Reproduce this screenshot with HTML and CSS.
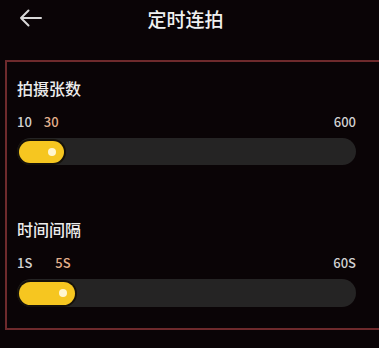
FILE: index.html
```html
<!DOCTYPE html>
<html lang="zh">
<head>
  <meta charset="UTF-8" />
  <meta name="viewport" content="width=device-width, initial-scale=1.0"/>
  <title>定时连拍</title>
  <link rel="stylesheet" href="styles.css">
</head>
<body>
  <header class="topbar">
    <button class="back" aria-label="返回">
      <svg width="24" height="18" viewBox="0 0 24 18">
        <path d="M22 9H2M9.5 1.5L2 9l7.5 7.5" fill="none" stroke="#d8d8d8" stroke-width="2" stroke-linecap="round" stroke-linejoin="round"/>
      </svg>
    </button>
    <h1>定时连拍</h1>
  </header>

  <div class="panel">
    <div class="setting">
      <h2>拍摄张数</h2>
      <div class="values">
        <span>10</span>
        <span class="current" style="margin-left: 12px">30</span>
        <span class="max">600</span>
      </div>
      <div class="track">
        <div class="fill" style="width: 45px"><i class="dot"></i></div>
      </div>
    </div>

    <div class="setting second">
      <h2>时间间隔</h2>
      <div class="values">
        <span>1S</span>
        <span class="current" style="margin-left: 23px">5S</span>
        <span class="max">60S</span>
      </div>
      <div class="track">
        <div class="fill" style="width: 56px"><i class="dot"></i></div>
      </div>
    </div>
  </div>
</body>
</html>
```

FILE: styles.css
```css
body {
  margin: 0;
  overflow: hidden;
  background: #0a0406;
  color: #e8e8e8;
  font-family: "Noto Sans CJK SC", "Noto Sans", sans-serif;
}

.topbar {
  display: flex;
  align-items: center;
  height: 36px;
}

.back {
  background: none;
  border: none;
  padding: 0 0 0 19px;
  display: flex;
  cursor: pointer;
}

.topbar h1 {
  flex: 1;
  margin: 0;
  padding-right: 51px;
  text-align: center;
  font-size: 19px;
  font-weight: 500;
  color: #f0f0f0;
}

.panel {
  margin: 24px -4px 0 5px;
  border: 2px solid #6e2a2c;
  padding: 16px 25px 21px 10px;
}

.setting h2 {
  margin: 0;
  font-size: 16px;
  line-height: 20px;
  font-weight: 500;
  color: #ececec;
}

.second {
  margin-top: 54px;
}

.values {
  display: flex;
  margin-top: 16px;
  font-size: 13px;
  font-weight: 500;
  line-height: 16px;
  color: #d2d2d2;
}

.values .current {
  color: #e3b08c;
}

.values .max {
  margin-left: auto;
}

.track {
  margin-top: 8px;
  height: 27px;
  border-radius: 14px;
  background: #252424;
  display: flex;
  align-items: center;
  padding: 0 2px;
}

.second .track {
  height: 28px;
}

.fill {
  position: relative;
  height: calc(100% - 5px);
  border-radius: 12px;
  background: #f6c620;
  box-shadow: 0 0 0 2px #15110a;
}

.dot {
  position: absolute;
  right: 8px;
  top: 50%;
  width: 8px;
  height: 8px;
  margin-top: -4px;
  border-radius: 50%;
  background: #fff6cf;
}
```
